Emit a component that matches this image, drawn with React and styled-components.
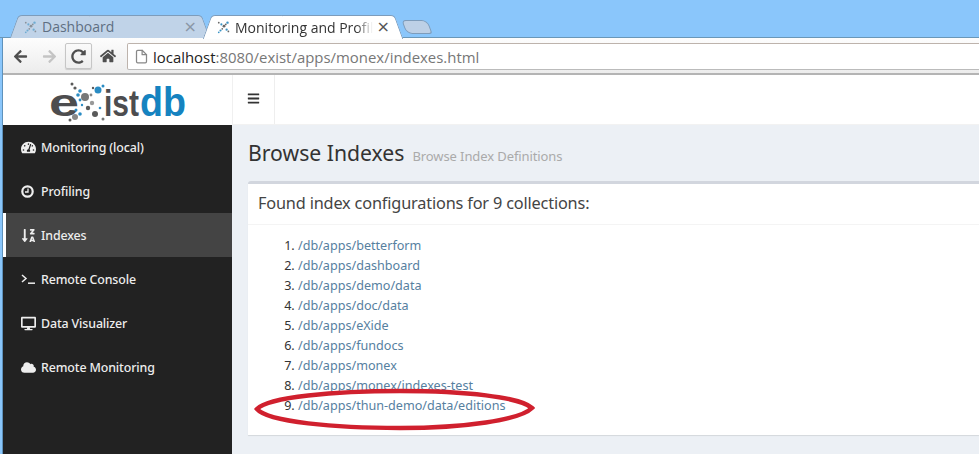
import React from "react";
import styled, { createGlobalStyle } from "styled-components";
import { FaArrowLeft, FaArrowRight, FaHome, FaRedoAlt, FaTachometerAlt, FaSortAlphaDownAlt, FaDesktop, FaCloud, FaBars } from "react-icons/fa";
import { FiFile } from "react-icons/fi";

const Global = createGlobalStyle`
  html, body { margin: 0; padding: 0; background: #8ac6fb; }
  * { box-sizing: border-box; }
`;

const BODY = `"Noto Sans", "Open Sans", sans-serif`;
const CHROME = `"Open Sans", "Noto Sans", sans-serif`;

const Screen = styled.div`
  position: relative;
  width: 979px;
  height: 454px;
  overflow: hidden;
  background: #8ac6fb;
  display: flex;
  flex-direction: column;
`;

const TabStrip = styled.div`
  height: 38px;
  padding: 15px 0 0 16px;
  display: flex;
  align-items: flex-start;
  gap: 6px;
  border-bottom: 1px solid #6a97b8;
`;

const Tab = styled.div`
  position: relative;
  width: 187px;
  padding: 0 6px 0 8px;
  display: flex;
  align-items: center;
  gap: 4px;
  font: 400 14px ${CHROME};
  white-space: nowrap;
  color: ${(p) => (p.$active ? "#333" : "#5f6f82")};
  z-index: ${(p) => (p.$active ? 2 : 1)};
  height: ${(p) => (p.$active ? 24 : 23)}px;
  &::before, &::after {
    content: "";
    position: absolute;
    top: 0;
    bottom: 0;
    width: 60%;
    z-index: -1;
    background: ${(p) => (p.$active ? "#fff" : "#c0d3e8")};
    border-top: 1px solid #7d9cbb;
  }
  &::before {
    left: -2px;
    border-left: 1px solid #7d9cbb;
    border-radius: 4px 0 0 0;
    transform: skewX(-20deg);
  }
  &::after {
    right: -3px;
    border-right: 1px solid #7d9cbb;
    border-radius: 0 4px 0 0;
    transform: skewX(20deg);
  }
`;

const TabTitle = styled.span`
  flex: 1;
  overflow: hidden;
  ${(p) => p.$fade && `
    -webkit-mask-image: linear-gradient(90deg, #000 88%, transparent);
    mask-image: linear-gradient(90deg, #000 88%, transparent);
  `}
`;

const TabClose = styled.span`
  font: 400 16px "DejaVu Sans", sans-serif;
  color: ${(p) => (p.$active ? "#555" : "#8b97a6")};
  line-height: 1;
`;

const NewTab = styled.div`
  width: 26px;
  height: 14px;
  margin: 5px 0 0 2px;
  background: #bdd0e6;
  border: 1px solid #7d9cbb;
  border-radius: 4px 6px 3px 6px;
  transform: skewX(20deg);
`;

const Window = styled.div`
  flex: 1;
  margin-left: 2px;
  display: flex;
  flex-direction: column;
  min-height: 0;
  background: #fff;
  border-left: 1px solid #5e92bc;
`;

const Toolbar = styled.div`
  height: 37px;
  display: flex;
  align-items: flex-start;
  padding: 5px 0 0 4px;
  background: linear-gradient(#fdfdfd, #ececec);
  border-bottom: 2px solid #b4b4b4;
`;

const NavButton = styled.div`
  width: ${(p) => p.$w}px;
  height: 26px;
  display: flex;
  align-items: center;
  justify-content: center;
  color: ${(p) => p.$color || "#4f4f4f"};
  ${(p) => p.$boxed && `
    border: 1px solid #c6c6c6;
    border-radius: 2px;
    background: linear-gradient(#fafafa, #eee);
    box-shadow: 0 1px 1px rgba(0,0,0,.15);
  `}
`;

const Omnibox = styled.div`
  flex: 1;
  height: 27px;
  margin: 0 -2px 0 4px;
  padding-left: 6px;
  display: flex;
  align-items: center;
  gap: 4px;
  background: #fff;
  border: 1px solid #bdb3ac;
  border-bottom-color: #bbb;
  border-radius: 2px 0 0 2px;
  font: 400 14.93px ${CHROME};
  color: #777;
`;

const Host = styled.span`
  color: #222;
`;

const Page = styled.div`
  flex: 1;
  min-height: 0;
  display: grid;
  grid-template-columns: 229px 1fr;
  grid-template-rows: 50px 1fr;
  font-family: ${BODY};
  background: #ecf0f5;
`;

const LogoCell = styled.div`
  background: #fff;
  display: flex;
  align-items: center;
  justify-content: center;
`;

const TopNav = styled.div`
  background: #fff;
  display: flex;
  border-bottom: 1px solid #f2f2f2;
`;

const Burger = styled.div`
  width: 43px;
  display: flex;
  align-items: center;
  justify-content: center;
  color: #333;
  border-left: 1px solid #f0f0f0;
  border-right: 1px solid #eee;
  padding-bottom: 2px;
`;

const Sidebar = styled.nav`
  background: #222;
  display: flex;
  flex-direction: column;
`;

const NavItem = styled.div`
  height: 44px;
  display: flex;
  align-items: center;
  padding-left: ${(p) => (p.$active ? 15 : 18)}px;
  border-left: ${(p) => (p.$active ? "3px solid #fff" : "none")};
  background: ${(p) => (p.$active ? "#444" : "transparent")};
  color: #ededed;
  font-size: 12.4px;
  font-weight: 500;
  letter-spacing: -0.12px;
`;

const NavIcon = styled.span`
  width: 20px;
  display: flex;
  align-items: center;
  color: #eee;
`;

const Content = styled.main`
  padding: 12px 0 0 16px;
  min-width: 0;
`;

const Title = styled.h1`
  margin: 0;
  height: 44px;
  display: flex;
  align-items: baseline;
  gap: 8px;
  font-weight: 400;
  font-size: 21.2px;
  line-height: 32px;
  color: #333;
  white-space: nowrap;
`;

const Subtitle = styled.small`
  font-size: 13px;
  color: #aaa;
  letter-spacing: -0.1px;
`;

const Box = styled.section`
  height: 254px;
  background: #fff;
  border-top: 3px solid #d2d6de;
  border-radius: 3px 0 0 0;
  box-shadow: 0 1px 1px rgba(0, 0, 0, 0.1);
`;

const BoxHeader = styled.h3`
  margin: 0;
  height: 41px;
  padding: 0 0 2px 10px;
  display: flex;
  align-items: center;
  font-weight: 400;
  font-size: 16.3px;
  letter-spacing: -0.17px;
  color: #444;
  border-bottom: 1px solid #f4f4f4;
  white-space: nowrap;
`;

const List = styled.ol`
  margin: 11px 0 0;
  padding: 0 0 0 50px;
  font-size: 12.6px;
  line-height: 20px;
  color: #333;
`;

const Item = styled.li`
  height: 20px;
`;

const Link = styled.a`
  color: #56809f;
  text-decoration: none;
`;

const Annotation = styled.svg`
  position: absolute;
  left: 250px;
  top: 384px;
  pointer-events: none;
`;

const Favicon = ({ faded }) => (
  <svg width="14" height="14" viewBox="0 0 16 16" style={{ opacity: faded ? 0.6 : 1, flex: "none" }}>
    {[[2,3,1],[5,5,1.2],[8,7,1.6],[12,3,1.4],[10,5,1],[4,12,1.2],[6,10,1],[11,11,1.3],[13,13,1],[2,14,1]].map(([x, y, r], i) => (
      <circle key={i} cx={x} cy={y} r={r} fill={i % 2 ? "#3a93c4" : "#666"} />
    ))}
  </svg>
);

const ClockIcon = () => (
  <svg width="13" height="13" viewBox="0 0 13 13" fill="none" stroke="currentColor">
    <circle cx="6.5" cy="6.5" r="5.2" strokeWidth="2.2" />
    <path d="M7 3.5V7H4" strokeWidth="1.3" />
  </svg>
);

const TerminalIcon = () => (
  <svg width="14" height="12" viewBox="0 0 14 12" fill="none" stroke="currentColor" strokeWidth="1.5">
    <path d="M1 2l4 3.5L1 9" />
    <path d="M7 10.2h7" />
  </svg>
);

const BLUE = "#2a8cc4";
const GREY = "#5a5a5a";
const dots = [
  [85,97,4,"#777"],[98,90,3.5,BLUE],[72,84,1.5,GREY],[75,88,1.6,GREY],[80,91,1.8,BLUE],[78,95,1.8,BLUE],
  [103,86,1.5,BLUE],[93,88,1.2,GREY],[91,95,1.4,"#888"],[80,100,1.4,BLUE],[92,103,2.2,"#999"],[88,108,2.2,GREY],
  [76,110,1.5,BLUE],[82,105,1.2,BLUE],[80,114,1.8,BLUE],[95,114,3,GREY],[75,117,3,"#888"],[70,120,1.5,GREY],[103,119,1.5,"#777"],[100,108,1.3,BLUE]
];

const LOGO_FONT = '"Liberation Sans", sans-serif';
const Logo = () => (
  <svg width="140" height="50" viewBox="48 75 140 50">
    <text x="49" y="116" fontFamily={LOGO_FONT} fontSize="38" fontWeight="700" fill="#4d4d4f" textLength="30" lengthAdjust="spacingAndGlyphs">e</text>
    <text x="104" y="116" fontFamily={LOGO_FONT} fontSize="36" fontWeight="700" fill="#4d4d4f" textLength="35" lengthAdjust="spacingAndGlyphs">ist</text>
    <text x="140" y="116" fontFamily={LOGO_FONT} fontSize="41" fontWeight="700" fill="#1583c0" textLength="46" lengthAdjust="spacingAndGlyphs">db</text>
    {dots.map(([x, y, r, c], i) => <circle key={i} cx={x} cy={y} r={r} fill={c} />)}
  </svg>
);

const items = [
  ["Monitoring (local)", <FaTachometerAlt size={15} />],
  ["Profiling", <ClockIcon />],
  ["Indexes", <FaSortAlphaDownAlt size={15} />, true],
  ["Remote Console", <TerminalIcon />],
  ["Data Visualizer", <FaDesktop size={15} />],
  ["Remote Monitoring", <FaCloud size={15} />],
];

const paths = [
  "betterform", "dashboard", "demo/data", "doc/data", "eXide", "fundocs", "monex", "monex/indexes-test", "thun-demo/data/editions",
];

export default function App() {
  return (
    <Screen>
      <Global />
      <TabStrip>
        <Tab>
          <Favicon faded />
          <TabTitle>Dashboard</TabTitle>
          <TabClose>×</TabClose>
        </Tab>
        <Tab $active>
          <Favicon />
          <TabTitle $fade>Monitoring and Profiling</TabTitle>
          <TabClose $active>×</TabClose>
        </Tab>
        <NewTab />
      </TabStrip>
      <Window>
        <Toolbar>
          <NavButton $w={27}><FaArrowLeft size={15} /></NavButton>
          <NavButton $w={31} $color="#c4c4c4"><FaArrowRight size={15} /></NavButton>
          <NavButton $w={27} $boxed><FaRedoAlt size={15} /></NavButton>
          <NavButton $w={31}><FaHome size={16} /></NavButton>
          <Omnibox>
            <FiFile size={15} color="#888" />
            <span><Host>localhost</Host>:8080/exist/apps/monex/indexes.html</span>
          </Omnibox>
        </Toolbar>
        <Page>
          <LogoCell><Logo /></LogoCell>
          <TopNav><Burger><FaBars size={13} /></Burger></TopNav>
          <Sidebar>
            {items.map(([label, icon, active]) => (
              <NavItem key={label} $active={active}>
                <NavIcon>{icon}</NavIcon>
                {label}
              </NavItem>
            ))}
          </Sidebar>
          <Content>
            <Title>Browse Indexes <Subtitle>Browse Index Definitions</Subtitle></Title>
            <Box>
              <BoxHeader>Found index configurations for 9 collections:</BoxHeader>
              <List>
                {paths.map((p) => (
                  <Item key={p}><Link href="#">/db/apps/{p}</Link></Item>
                ))}
              </List>
            </Box>
          </Content>
        </Page>
      </Window>
      <Annotation width="290" height="50" viewBox="0 0 290 50">
        <path d="M7 25 C 18 13, 85 7, 150 7 C 215 7, 270 13, 282 24 C 270 36, 215 44, 150 44 C 85 44, 18 38, 7 25 Z" fill="none" stroke="#d0202e" strokeWidth="4.5" />
      </Annotation>
    </Screen>
  );
}
